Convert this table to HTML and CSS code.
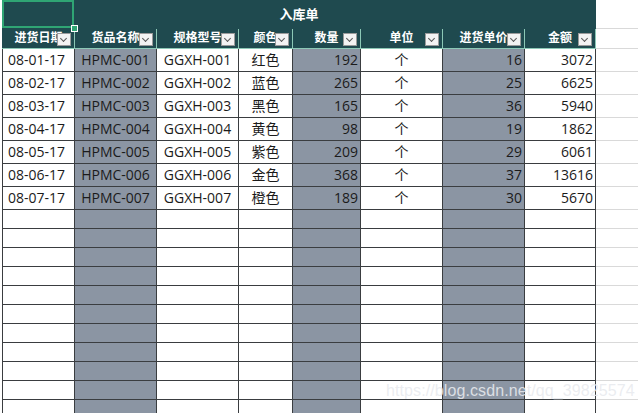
FILE: index.html
```html
<!DOCTYPE html>
<html lang="zh">
<head>
<meta charset="utf-8">
<link rel="stylesheet" href="styles.css">
</head>
<body>
<div class="sheet">
  <table class="grid">
    <colgroup>
      <col class="c1"><col class="c2"><col class="c3"><col class="c4"><col class="c5"><col class="c6"><col class="c7"><col class="c8"><col class="c9">
    </colgroup>
    <tr class="title-row">
      <td class="title" colspan="8">入库单</td>
      <td class="fill"></td>
    </tr>
    <tr class="head-row">
      <th><span class="hl">进货日期</span><span class="fb"></span></th>
      <th><span class="hl">货品名称</span><span class="fb"></span></th>
      <th><span class="hl">规格型号</span><span class="fb"></span></th>
      <th><span class="hl">颜色</span><span class="fb"></span></th>
      <th><span class="hl">数量</span><span class="fb"></span></th>
      <th><span class="hl">单位</span><span class="fb"></span></th>
      <th><span class="hl">进货单价</span><span class="fb"></span></th>
      <th><span class="hl">金额</span><span class="fb"></span></th>
      <td class="fill"></td>
    </tr>
    <tr class="data"><td class="l">08-01-17</td><td class="g c">HPMC-001</td><td class="c">GGXH-001</td><td class="c">红色</td><td class="g r">192</td><td class="c">个</td><td class="g r">16</td><td class="r">3072</td><td class="fill"></td></tr>
    <tr class="data"><td class="l">08-02-17</td><td class="g c">HPMC-002</td><td class="c">GGXH-002</td><td class="c">蓝色</td><td class="g r">265</td><td class="c">个</td><td class="g r">25</td><td class="r">6625</td><td class="fill"></td></tr>
    <tr class="data"><td class="l">08-03-17</td><td class="g c">HPMC-003</td><td class="c">GGXH-003</td><td class="c">黑色</td><td class="g r">165</td><td class="c">个</td><td class="g r">36</td><td class="r">5940</td><td class="fill"></td></tr>
    <tr class="data"><td class="l">08-04-17</td><td class="g c">HPMC-004</td><td class="c">GGXH-004</td><td class="c">黄色</td><td class="g r">98</td><td class="c">个</td><td class="g r">19</td><td class="r">1862</td><td class="fill"></td></tr>
    <tr class="data"><td class="l">08-05-17</td><td class="g c">HPMC-005</td><td class="c">GGXH-005</td><td class="c">紫色</td><td class="g r">209</td><td class="c">个</td><td class="g r">29</td><td class="r">6061</td><td class="fill"></td></tr>
    <tr class="data"><td class="l">08-06-17</td><td class="g c">HPMC-006</td><td class="c">GGXH-006</td><td class="c">金色</td><td class="g r">368</td><td class="c">个</td><td class="g r">37</td><td class="r">13616</td><td class="fill"></td></tr>
    <tr class="data"><td class="l">08-07-17</td><td class="g c">HPMC-007</td><td class="c">GGXH-007</td><td class="c">橙色</td><td class="g r">189</td><td class="c">个</td><td class="g r">30</td><td class="r">5670</td><td class="fill"></td></tr>
    <tr class="empty"><td></td><td class="g"></td><td></td><td></td><td class="g"></td><td></td><td class="g"></td><td></td><td class="fill"></td></tr>
    <tr class="empty"><td></td><td class="g"></td><td></td><td></td><td class="g"></td><td></td><td class="g"></td><td></td><td class="fill"></td></tr>
    <tr class="empty"><td></td><td class="g"></td><td></td><td></td><td class="g"></td><td></td><td class="g"></td><td></td><td class="fill"></td></tr>
    <tr class="empty"><td></td><td class="g"></td><td></td><td></td><td class="g"></td><td></td><td class="g"></td><td></td><td class="fill"></td></tr>
    <tr class="empty"><td></td><td class="g"></td><td></td><td></td><td class="g"></td><td></td><td class="g"></td><td></td><td class="fill"></td></tr>
    <tr class="empty"><td></td><td class="g"></td><td></td><td></td><td class="g"></td><td></td><td class="g"></td><td></td><td class="fill"></td></tr>
    <tr class="empty"><td></td><td class="g"></td><td></td><td></td><td class="g"></td><td></td><td class="g"></td><td></td><td class="fill"></td></tr>
    <tr class="empty"><td></td><td class="g"></td><td></td><td></td><td class="g"></td><td></td><td class="g"></td><td></td><td class="fill"></td></tr>
    <tr class="empty"><td></td><td class="g"></td><td></td><td></td><td class="g"></td><td></td><td class="g"></td><td></td><td class="fill"></td></tr>
    <tr class="empty"><td></td><td class="g"></td><td></td><td></td><td class="g"></td><td></td><td class="g"></td><td></td><td class="fill"></td></tr>
    <tr class="empty"><td></td><td class="g"></td><td></td><td></td><td class="g"></td><td></td><td class="g"></td><td></td><td class="fill"></td></tr>
  </table>
  <div class="selection"></div>
  <div class="handle"></div>
  <div class="watermark">https://blog.csdn.net/qq_39825574</div>
</div>
</body>
</html>
```

FILE: styles.css
```css
html, body {
  margin: 0;
  padding: 0;
  background: #ffffff;
  overflow: hidden;
}

.sheet {
  position: relative;
  width: 638px;
  height: 413px;
  overflow: hidden;
  padding-left: 2px;
  box-sizing: border-box;
  font-family: "Open Sans", "Noto Sans CJK SC", sans-serif;
  color: #1b1b1b;
}

.grid {
  border-collapse: collapse;
  table-layout: fixed;
  width: 637px;
}

.c1 { width: 72px; }
.c2 { width: 82px; }
.c3 { width: 82px; }
.c4 { width: 54px; }
.c5 { width: 68px; }
.c6 { width: 82px; }
.c7 { width: 82px; }
.c8 { width: 71px; }
.c9 { width: 44px; }

.grid td,
.grid th {
  padding: 0;
  border: 1px solid #3a3d40;
  font-size: 14px;
  line-height: 18px;
  white-space: nowrap;
  overflow: hidden;
}

.title-row { height: 28px; }

.title {
  background: #1f4a4f;
  color: #ffffff;
  font-family: "Noto Sans CJK SC", sans-serif;
  font-weight: bold;
  font-size: 13px !important;
  text-align: center;
  vertical-align: middle;
  border-top: none !important;
  border-left-color: #1f4a4f !important;
  border-bottom: 1px solid #1f4a4f !important;
  border-right-color: #1f4a4f !important;
}

.head-row { height: 20px; }

.head-row th {
  position: relative;
  background: #1f4a4f;
  color: #ffffff;
  font-family: "Noto Sans CJK SC", sans-serif;
  font-weight: bold;
  font-size: 12px;
  line-height: 16px;
  text-align: center;
  vertical-align: middle;
  border-color: #8cc8b6;
  border-top-color: #1f4a4f;
}

.head-row th:first-child { border-left-color: #1f4a4f; }

.hl {
  position: relative;
  top: -1px;
}

.fb {
  position: absolute;
  right: 3px;
  top: 4px;
  width: 12px;
  height: 11px;
  background: #f3f3f3;
  border: 1px solid #9a9a9a;
}

.fb::after {
  content: "";
  position: absolute;
  left: 3px;
  top: 2px;
  width: 4px;
  height: 4px;
  border-right: 1.2px solid #555;
  border-bottom: 1.2px solid #555;
  transform: rotate(45deg);
}

.data { height: 23px; }
.empty { height: 19px; }

.g { background: #8b95a3; }

.l { text-align: left; padding-left: 5px !important; }
.c { text-align: center; }
.r { text-align: right; padding-right: 2px !important; }

.grid td.fill {
  border-color: #d9d9d9;
  border-right: none;
  border-top-color: #d9d9d9;
  background: #ffffff;
}

.title-row td.fill {
  border-top: none;
}

.selection {
  position: absolute;
  left: 2px;
  top: 0;
  width: 72px;
  height: 28px;
  box-sizing: border-box;
  border: 2px solid #2fa574;
}

.handle {
  position: absolute;
  left: 71px;
  top: 25px;
  width: 5px;
  height: 5px;
  background: #2fa574;
  border: 1px solid #ffffff;
}

.watermark {
  position: absolute;
  left: 386px;
  top: 382px;
  font-family: "Liberation Sans", Arial, sans-serif;
  font-size: 16px;
  color: rgba(232, 234, 238, 0.88);
  letter-spacing: 0.1px;
  white-space: nowrap;
}
```
